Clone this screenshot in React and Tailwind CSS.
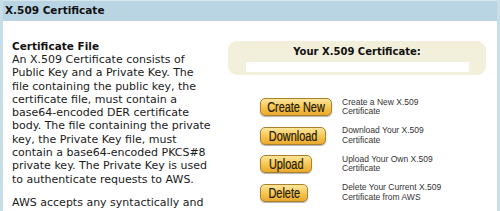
const actions = [
  { label: "Create New", w: "w-[72px]", lines: ["Create a New X.509", "Certificate"] },
  { label: "Download", w: "w-[66px]", lines: ["Download Your X.509", "Certificate"] },
  { label: "Upload", w: "w-[52px]", lines: ["Upload Your Own X.509", "Certificate"] },
  { label: "Delete", w: "w-[48px]", lines: ["Delete Your Current X.509", "Certificate from AWS"] },
];

const intro = [
  "An X.509 Certificate consists of",
  "Public Key and a Private Key. The",
  "file containing the public key, the",
  "certificate file, must contain a",
  "base64-encoded DER certificate",
  "body. The file containing the private",
  "key, the Private Key file, must",
  "contain a base64-encoded PKCS#8",
  "private key. The Private Key is used",
  "to authenticate requests to AWS.",
];

function ActionButton({ label, w }) {
  return (
    <button
      className={`${w} flex h-[18px] shrink-0 items-center justify-center rounded-[5px] border border-[#a9812a] bg-gradient-to-b from-[#fde59a] via-[#f6c853] to-[#eaa92e] text-[14px] leading-none text-[#201808] shadow-[0_1px_1px_rgba(0,0,0,0.3)]`}
      style={{ fontFamily: '"Liberation Sans", Arial, sans-serif' }}
    >
      <span className="inline-block scale-x-[0.78] whitespace-nowrap [-webkit-text-stroke:0.2px_#201808]">
        {label}
      </span>
    </button>
  );
}

export default function App() {
  return (
    <div
      className="h-[211px] w-[500px] overflow-hidden border-x-[3px] border-[#c7dde8] bg-white text-[#1a1a1a]"
      style={{ fontFamily: '"DejaVu Sans", Verdana, sans-serif' }}
    >
      {/* Title bar */}
      <div className="flex h-[21px] items-center border-t border-[#d6e7ef] bg-[#b9d4e2] pl-[2px] text-[10.5px] font-bold text-[#111]">
        X.509 Certificate
      </div>

      <div className="flex">
        {/* Left column */}
        <div className="w-[222px] shrink-0 pl-[9px] pt-[19px]">
          <h2 className="text-[10.5px] font-bold leading-[13px] text-[#111]">Certificate File</h2>
          <p className="text-[11px] leading-[13.3px]">
            {intro.map((line) => (
              <span key={line} className="block whitespace-nowrap">
                {line}
              </span>
            ))}
          </p>
          <p className="mt-[10px] whitespace-nowrap text-[11px] leading-[13.3px]">
            AWS accepts any syntactically and
          </p>
        </div>

        {/* Right column */}
        <div className="flex-1 pl-[3px] pr-[11px] pt-[20px]">
          <div className="flex h-[34px] flex-col items-center rounded-[9px] bg-[#f2efda] pt-[5px]">
            <div className="text-[10px] font-bold leading-[12px] text-[#111]">Your X.509 Certificate:</div>
            <div className="mt-[4px] h-[10px] w-[223px] bg-white" />
          </div>

          <div className="mt-[22.5px] flex flex-col gap-[9.5px] pl-[32px]">
            {actions.map((a) => (
              <div key={a.label} className="flex h-[19px] items-center">
                <div className="flex w-[82px] shrink-0">
                  <ActionButton label={a.label} w={a.w} />
                </div>
                <div
                  className="text-[8.5px] leading-[9.5px] text-[#333]"
                  style={{ fontFamily: '"Liberation Sans", Arial, sans-serif' }}
                >
                  {a.lines.map((l) => (
                    <div key={l}>{l}</div>
                  ))}
                </div>
              </div>
            ))}
          </div>
        </div>
      </div>
    </div>
  );
}
